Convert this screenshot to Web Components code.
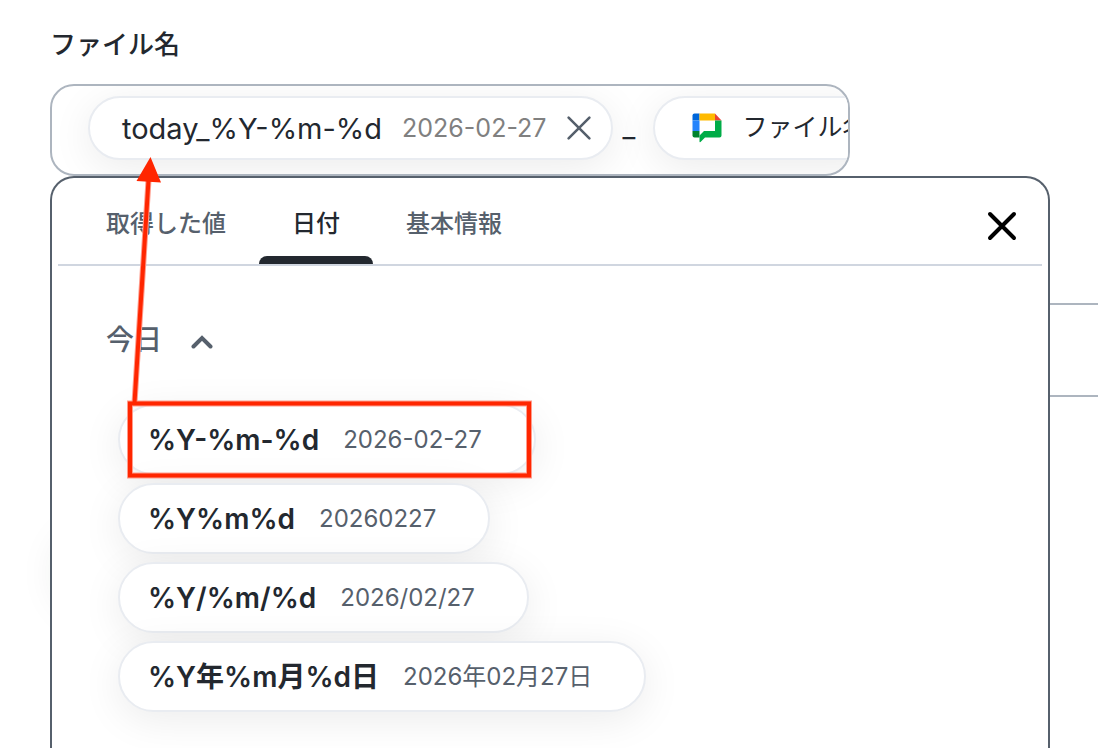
<!DOCTYPE html>
<html lang="ja">
<head>
<meta charset="utf-8">
<meta name="viewport" content="width=device-width, initial-scale=1">
<title>ファイル名</title>
<style>
	body {
		margin: 0;
		background: #fff;
		color: #23282f;
		font-family: Inter, "Noto Sans CJK JP", sans-serif;
	}
</style>
</head>
<body>
<file-name-form></file-name-form>

<script>
/**
 * Defines an element whose shadow root is filled from its static template
 */
class BaseElement extends HTMLElement {
	constructor() {
		super();

		const template = document.createElement("template");
		template.innerHTML = this.constructor.template;

		this.attachShadow({mode: "open"});
		this.shadowRoot.appendChild(template.content.cloneNode(true));
	}
}

/**
 * value-chip: a value placed in the field, with an optional sample and
 * remove button
 */
class ValueChip extends BaseElement {
	static template = `
	<style>
		:host {
			display: flex;
			flex: none;
			align-items: center;
			box-sizing: border-box;
			height: 64px;
			padding: 0 19px 0 32px;
			border: 2px solid #e9ecf1;
			border-radius: 32px;
			background: #fff;
			box-shadow: 0 8px 40px rgba(0, 0, 0, 0.08);
			font-size: 29px;
			white-space: nowrap;
		}
		::slotted([slot="icon"]) {
			margin: 0 20px 0 5px;
		}
		::slotted([slot="title"]) {
			font-size: 25px;
			line-height: 36px;
			padding-bottom: 2px;
		}
		::slotted([slot="sample"]) {
			margin-left: 20px;
			color: #808080;
			font-size: 25px;
		}
		::slotted([slot="action"]) {
			margin-left: 20px;
		}
	</style>
	<slot name="icon"></slot>
	<slot name="title"></slot>
	<slot></slot>
	<slot name="sample"></slot>
	<slot name="action"></slot>
	`;
}

customElements.define("value-chip", ValueChip);

/**
 * close-button: a cross, sized with --size and --stroke
 */
class CloseButton extends BaseElement {
	static template = `
	<style>
		:host {
			display: block;
		}
		button {
			display: block;
			padding: 0;
			border: none;
			background: none;
			color: inherit;
			cursor: pointer;
		}
		svg {
			display: block;
			width: var(--size, 30px);
			height: var(--size, 30px);
		}
		path {
			stroke-width: var(--stroke, 4);
		}
	</style>
	<button type="button" aria-label="閉じる">
		<svg viewBox="0 0 30 30" fill="none" stroke="currentColor" stroke-linecap="round">
			<path d="M3 3 27 27M27 3 3 27" />
		</svg>
	</button>
	`;
}

customElements.define("close-button", CloseButton);

/**
 * chat-icon: the four colour chat logo
 */
class ChatIcon extends BaseElement {
	static template = `
	<style>
		:host, svg {
			display: block;
			width: 30px;
			height: 30px;
		}
	</style>
	<svg viewBox="0 0 30 30" aria-hidden="true">
		<path fill="#0066da" d="M2.500 .5H7.500V7.500H.5V2.500Q.5.5 2.500.5Z" />
		<path fill="#2684fc" d="M.5 7.500H7.500V18H.5Z" />
		<path fill="#00832d" d="M.5 18H7.500V24.500H2.500Q.5 24.500.5 22.500Z" />
		<path fill="#ffba00" d="M7.500.5H23V7.500H7.500Z" />
		<path fill="#ea4335" d="M23 .5 29.500 7.500H23Z" />
		<path fill="#00ac47" d="M23 7.500H29.500V22.500Q29.500 24.500 27.500 24.500H13L8.500 29Q7.500 29.500 7.500 28.500V22.500L12 18H23Z" />
	</svg>
	`;
}

customElements.define("chat-icon", ChatIcon);

/**
 * token-field: the bordered field that chips and free text sit in
 */
class TokenField extends BaseElement {
	static template = `
	<style>
		:host {
			display: flex;
			align-items: center;
			box-sizing: border-box;
			height: 92px;
			padding: 0 36px 4px;
			border: 2px solid #adb5bf;
			border-radius: 24px;
			background: #fff;
			overflow: hidden;
		}
		::slotted(input) {
			flex: none;
			box-sizing: border-box;
			width: 40px;
			padding: 0 9px 2px;
			border: none;
			outline: none;
			background: none;
			color: inherit;
			font: 28px Inter, "Noto Sans CJK JP", sans-serif;
		}
	</style>
	<slot></slot>
	`;
}

customElements.define("token-field", TokenField);

/**
 * tab-item: one tab of the picker, underlined when it has "selected"
 */
class TabItem extends BaseElement {
	static template = `
	<style>
		:host {
			display: block;
		}
		button {
			display: block;
			height: 86px;
			padding: 0 33px;
			border: none;
			background: none;
			color: #56606c;
			font: 500 24px/92px Inter, "Noto Sans CJK JP", sans-serif;
			white-space: nowrap;
			cursor: pointer;
		}
		button::after {
			content: "";
			display: block;
			height: 8px;
			margin: -14px -33px 0;
			border-radius: 8px 8px 0 0;
		}
		:host([selected]) button {
			color: #23282f;
		}
		:host([selected]) button::after {
			background: #23282f;
		}
	</style>
	<button type="button" role="tab"><slot></slot></button>
	`;

	connectedCallback() {
		this.shadowRoot.querySelector("button").setAttribute("aria-selected", this.hasAttribute("selected"));
	}
}

customElements.define("tab-item", TabItem);

/**
 * value-option: a format that can be inserted, with a sample of its output
 */
class ValueOption extends BaseElement {
	static template = `
	<style>
		:host {
			display: block;
		}
		button {
			display: flex;
			align-items: center;
			gap: 24px;
			height: 71px;
			padding: 0 52px 0 28px;
			border: 2px solid #e9ecf1;
			border-radius: 36px;
			background: #fff;
			box-shadow: 0 8px 40px rgba(0, 0, 0, 0.08);
			color: #23282f;
			font: 600 28px/34px Inter, "Noto Sans CJK JP", sans-serif;
			white-space: nowrap;
			cursor: pointer;
		}
		::slotted([slot="sample"]) {
			color: #56606c;
			font-size: 24px;
			font-weight: 400;
		}
	</style>
	<button type="button"><slot></slot><slot name="sample"></slot></button>
	`;
}

customElements.define("value-option", ValueOption);

/**
 * option-group: a collapsible heading with its options below
 */
class OptionGroup extends BaseElement {
	static template = `
	<style>
		:host {
			display: block;
		}
		#toggle {
			display: flex;
			align-items: center;
			gap: 29px;
			padding: 0;
			border: none;
			background: none;
			color: #56606c;
			font: 500 28px/40px Inter, "Noto Sans CJK JP", sans-serif;
			cursor: pointer;
		}
		svg {
			display: block;
			width: 22px;
			height: 14px;
			margin-top: 4px;
		}
		#options {
			display: flex;
			flex-direction: column;
			align-items: flex-start;
			gap: 8px;
			padding: 44px 0 0 12px;
		}
		#options[hidden] {
			display: none;
		}
	</style>
	<button type="button" id="toggle" aria-expanded="true">
		<slot name="title"></slot>
		<svg viewBox="0 0 22 14" fill="none" stroke="currentColor" stroke-width="4" stroke-linecap="round" stroke-linejoin="miter" aria-hidden="true">
			<path d="M2.500 11.500 11 3 19.500 11.500" />
		</svg>
	</button>
	<div id="options"><slot></slot></div>
	`;

	constructor() {
		super();

		const toggle = this.shadowRoot.getElementById("toggle");
		const options = this.shadowRoot.getElementById("options");
		toggle.addEventListener("click", () => {
			options.hidden = !options.hidden;
			toggle.setAttribute("aria-expanded", !options.hidden);
		});
	}
}

customElements.define("option-group", OptionGroup);

/**
 * value-picker: the panel that opens under the field
 */
class ValuePicker extends BaseElement {
	static template = `
	<style>
		:host {
			display: block;
			box-sizing: border-box;
			padding: 0 6px;
			border: 2px solid #56606c;
			border-bottom: none;
			border-radius: 24px 24px 0 0;
			background: #fff;
			overflow: hidden;
		}
		header {
			display: flex;
			align-items: center;
			justify-content: space-between;
			padding: 0 25px 0 15px;
			border-bottom: 2px solid #d0d6e0;
		}
		[role="tablist"] {
			display: flex;
		}
		close-button {
			margin-top: 10px;
			color: #000;
		}
		#content {
			padding: 54px 48px;
		}
	</style>
	<header>
		<div role="tablist"><slot name="tab"></slot></div>
		<close-button></close-button>
	</header>
	<div id="content"><slot></slot></div>
	`;
}

customElements.define("value-picker", ValuePicker);

/**
 * callout-arrow: red frame round an option and an arrow up to its chip
 */
class CalloutArrow extends BaseElement {
	static template = `
	<style>
		:host {
			display: block;
			pointer-events: none;
		}
		svg {
			display: block;
		}
	</style>
	<svg width="410" height="326" viewBox="125 156 410 326" fill="none" aria-hidden="true">
		<g stroke="#ff9c8c" stroke-width="6">
			<path d="M134.500 403 148.500 180" />
			<path d="M130 403.500H529V475.500H130Z" />
		</g>
		<g stroke="#ff2600" stroke-width="4">
			<path d="M134.500 403 148.500 180" />
			<path d="M130 403.500H529V475.500H130Z" />
		</g>
		<path fill="#ff2600" d="M150.500 157 161 182.500 136.500 181Z" />
	</svg>
	`;
}

customElements.define("callout-arrow", CalloutArrow);

/**
 * file-name-form: the form, the field behind and the open picker
 */
class FileNameForm extends BaseElement {
	static template = `
	<style>
		:host {
			display: block;
			position: relative;
			box-sizing: border-box;
			height: 100vh;
			padding: 25px 48px 0 50px;
			overflow: hidden;
		}
		h2 {
			margin: 0 0 19px;
			font-size: 26px;
			font-weight: 500;
			line-height: 40px;
		}
		#name {
			max-width: 800px;
		}
		#next {
			height: 94px;
			margin: 127px -98px 0 0;
		}
		#card {
			height: 80px;
			margin: 128px 100px 0 8px;
			border-radius: 40px;
			box-shadow: 0 8px 40px rgba(0, 50, 20, 0.1);
		}
		value-picker {
			position: absolute;
			top: 176px;
			right: 48px;
			bottom: 0;
			left: 50px;
		}
		callout-arrow {
			position: absolute;
			top: 156px;
			left: 125px;
		}
		#remove {
			--size: 26px;
			--stroke: 3;
			color: #56606c;
		}
	</style>
	<h2>ファイル名</h2>
	<token-field id="name">
		<value-chip>
			<span>today_%Y-%m-%d</span>
			<span slot="sample">2026-02-27</span>
			<close-button slot="action" id="remove"></close-button>
		</value-chip>
		<input type="text" value="_" aria-label="ファイル名">
		<value-chip>
			<chat-icon slot="icon"></chat-icon>
			<span slot="title">ファイル名</span>
		</value-chip>
	</token-field>
	<token-field id="next"></token-field>
	<div id="card"></div>

	<value-picker>
		<tab-item slot="tab">取得した値</tab-item>
		<tab-item slot="tab" selected>日付</tab-item>
		<tab-item slot="tab">基本情報</tab-item>
		<option-group>
			<span slot="title">今日</span>
			<value-option>%Y-%m-%d<span slot="sample">2026-02-27</span></value-option>
			<value-option>%Y%m%d<span slot="sample">20260227</span></value-option>
			<value-option>%Y/%m/%d<span slot="sample">2026/02/27</span></value-option>
			<value-option>%Y年%m月%d日<span slot="sample">2026年02月27日</span></value-option>
		</option-group>
	</value-picker>
	<callout-arrow></callout-arrow>
	`;
}

customElements.define("file-name-form", FileNameForm);
</script>
</body>
</html>
